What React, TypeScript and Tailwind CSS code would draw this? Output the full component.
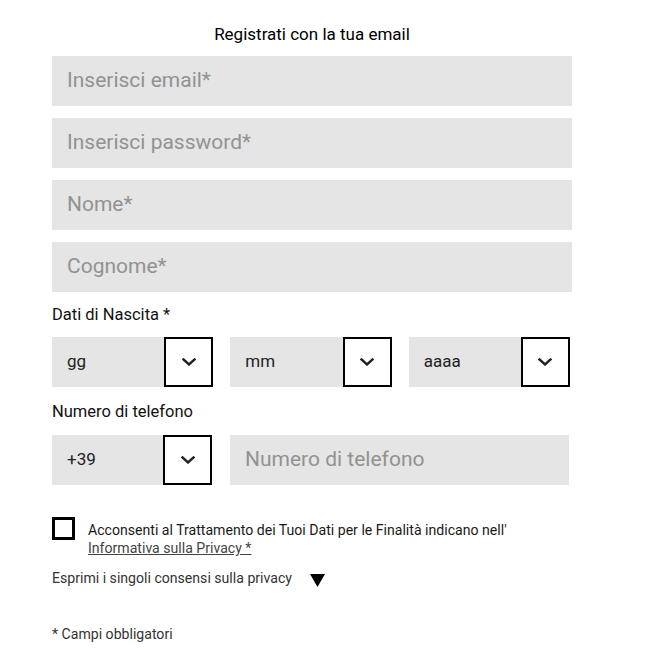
import { useState } from "react";

function Chevron() {
  return (
    <svg width="14" height="8" viewBox="0 0 14 8" fill="none">
      <path d="M1.5 1.5 L7 6.5 L12.5 1.5" stroke="#222" strokeWidth="2.4" strokeLinecap="square" />
    </svg>
  );
}

function SelectField({ value }: { value: string }) {
  return (
    <div className="flex h-[50px]">
      <div className="flex flex-1 items-center bg-[#e5e5e5] pl-[15px] text-[17px] text-[#222]">{value}</div>
      <button
        type="button"
        className="flex h-[50px] w-[49px] shrink-0 items-center justify-center border-2 border-black bg-white"
      >
        <Chevron />
      </button>
    </div>
  );
}

function TextField({ placeholder }: { placeholder: string }) {
  return (
    <input
      placeholder={placeholder}
      className="h-[50px] w-full bg-[#e5e5e5] px-[15px] pb-[2px] text-[21px] text-[#222] outline-none placeholder:text-[#929292]"
    />
  );
}

export default function App() {
  const [checked, setChecked] = useState(false);

  return (
    <div className="min-h-screen bg-white font-['Roboto',sans-serif] text-[#111]">
      <div className="w-[520px] pl-[52px] box-content pt-[22px]">
        {/* Title */}
        <h1 className="text-center text-[17px] leading-[24px] text-black">Registrati con la tua email</h1>

        {/* Text inputs */}
        <div className="mt-[10px] flex flex-col gap-[12px]">
          <TextField placeholder="Inserisci email*" />
          <TextField placeholder="Inserisci password*" />
          <TextField placeholder="Nome*" />
          <TextField placeholder="Cognome*" />
        </div>

        {/* Birth date */}
        <div className="mt-[13px] text-[16.5px] leading-[20px] text-[#111]">Dati di Nascita *</div>
        <div className="mt-[12px] grid w-[518px] grid-cols-3 gap-[17px]">
          <SelectField value="gg" />
          <SelectField value="mm" />
          <SelectField value="aaaa" />
        </div>

        {/* Phone */}
        <div className="mt-[15px] text-[16.5px] leading-[20px] text-[#111]">Numero di telefono</div>
        <div className="mt-[13px] flex w-[517px] gap-[18px]">
          <div className="w-[160px] shrink-0">
            <SelectField value="+39" />
          </div>
          <div className="flex-1">
            <TextField placeholder="Numero di telefono" />
          </div>
        </div>

        {/* Consent */}
        <div className="mt-[32px] flex items-start">
          <button
            type="button"
            onClick={() => setChecked(!checked)}
            className="h-[23px] w-[23px] shrink-0 border-[3px] border-black bg-white"
          />
          <div className="ml-[13px] mt-[4px] text-[14.1px] leading-[18px] text-[#1a1a1a]">
            Acconsenti al Trattamento dei Tuoi Dati per le Finalità indicano nell'
            <br />
            <a className="text-[#444] underline">Informativa sulla Privacy *</a>
          </div>
        </div>

        <div className="mt-[12px] flex items-center">
          <span className="text-[14.1px] leading-[18px] text-[#333]">Esprimi i singoli consensi sulla privacy</span>
          <svg className="ml-[18px] mt-[4px]" width="15" height="13" viewBox="0 0 15 13">
            <path d="M0 0 H15 L7.5 13 Z" fill="#000" />
          </svg>
        </div>

        <div className="mt-[38px] text-[14.1px] leading-[18px] text-[#333]">* Campi obbligatori</div>
      </div>
    </div>
  );
}
